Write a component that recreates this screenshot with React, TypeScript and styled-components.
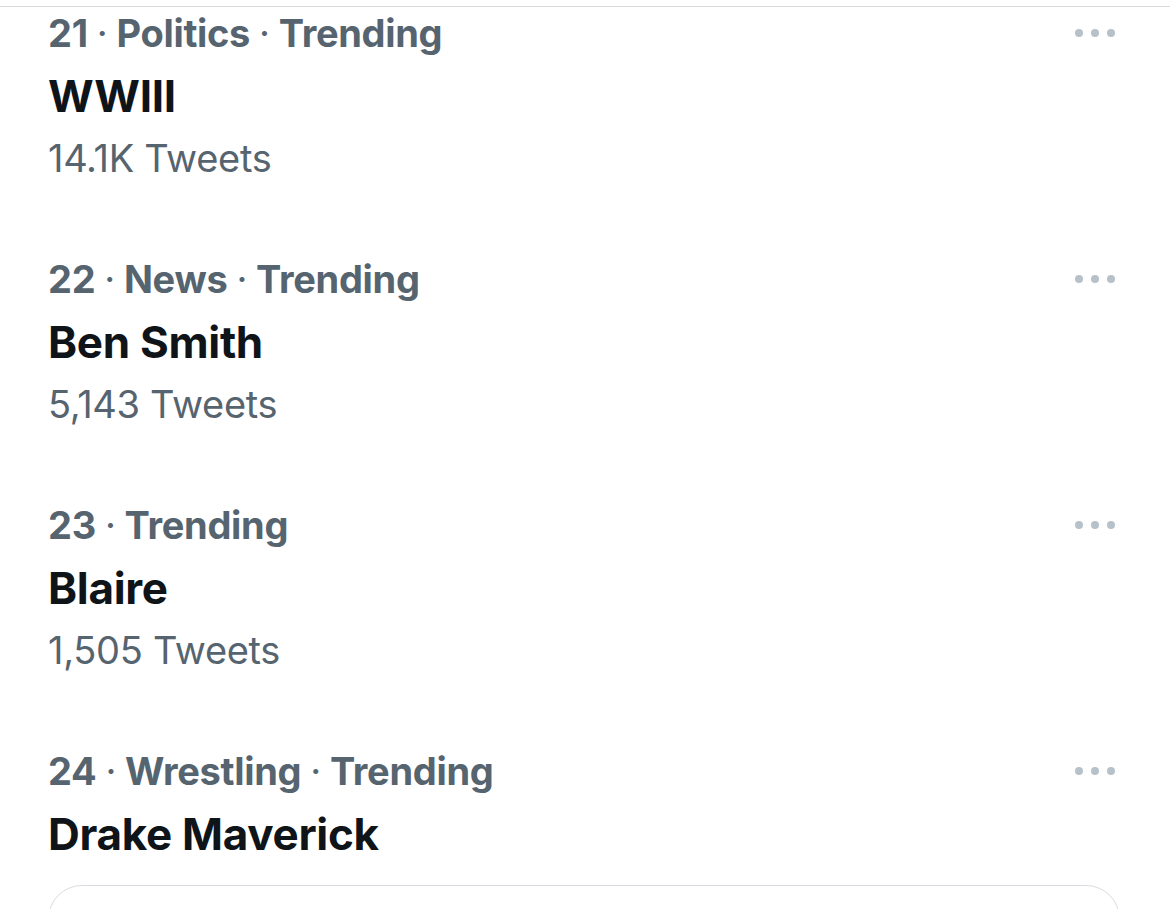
import React from "react";
import styled, { createGlobalStyle } from "styled-components";

const GlobalStyle = createGlobalStyle`
  html, body {
    margin: 0;
    padding: 0;
    background: #ffffff;
  }
  body {
    font-family: Inter, "Noto Sans", "Liberation Sans", sans-serif;
    -webkit-font-smoothing: antialiased;
  }
`;

interface Trend {
  rank: number;
  category?: string;
  name: string;
  count?: string;
}

const trends: Trend[] = [
  { rank: 21, category: "Politics", name: "WWIII", count: "14.1K Tweets" },
  { rank: 22, category: "News", name: "Ben Smith", count: "5,143 Tweets" },
  { rank: 23, name: "Blaire", count: "1,505 Tweets" },
  { rank: 24, category: "Wrestling", name: "Drake Maverick" },
];

const Page = styled.div`
  width: 1170px;
  height: 909px;
  overflow: hidden;
  background: #ffffff;
  border-top: 1px solid #d9dcdf;
  margin-top: 6px;
  box-sizing: border-box;
`;

const List = styled.div`
  display: flex;
  flex-direction: column;
  padding: 1px 0 0 48px;
`;

const Row = styled.div<{ $hasCount: boolean }>`
  display: flex;
  flex-direction: column;
  padding-bottom: ${(p) => (p.$hasCount ? 71 : 20)}px;
`;

const MetaLine = styled.div`
  display: flex;
  align-items: center;
  justify-content: space-between;
  padding-right: 55px;
  height: 50px;
`;

const Meta = styled.span`
  font-size: 38px;
  line-height: 50px;
  font-weight: 700;
  color: #56646f;
  letter-spacing: -0.3px;
`;

const Dot = styled.span`
  margin: 0 9px;
  font-weight: 400;
`;

const Title = styled.div`
  margin-top: 7px;
  font-size: 44px;
  line-height: 62px;
  font-weight: 700;
  color: #0f1419;
  letter-spacing: -0.3px;
`;

const Count = styled.div`
  margin-top: 6px;
  font-size: 38px;
  line-height: 50px;
  font-weight: 400;
  color: #56646f;
  letter-spacing: -0.3px;
`;

const More = styled.div`
  display: flex;
  gap: 8px;
  align-self: flex-start;
  margin-top: 21px;
`;

const MoreDot = styled.span`
  width: 8px;
  height: 8px;
  border-radius: 50%;
  background: #b7c1ca;
`;

const Card = styled.div`
  margin-right: 50px;
  height: 80px;
  border: 1.5px solid #d8dce0;
  border-radius: 34px;
`;

const Sep = () => <Dot>·</Dot>;

export default function App() {
  return (
    <>
      <GlobalStyle />
      <Page>
        <List>
          {trends.map((t) => (
            <Row key={t.rank} $hasCount={!!t.count}>
              <MetaLine>
                <Meta>
                  {t.rank}
                  <Sep />
                  {t.category && (
                    <>
                      {t.category}
                      <Sep />
                    </>
                  )}
                  Trending
                </Meta>
                <More>
                  <MoreDot />
                  <MoreDot />
                  <MoreDot />
                </More>
              </MetaLine>
              <Title>{t.name}</Title>
              {t.count && <Count>{t.count}</Count>}
            </Row>
          ))}
          <Card />
        </List>
      </Page>
    </>
  );
}
